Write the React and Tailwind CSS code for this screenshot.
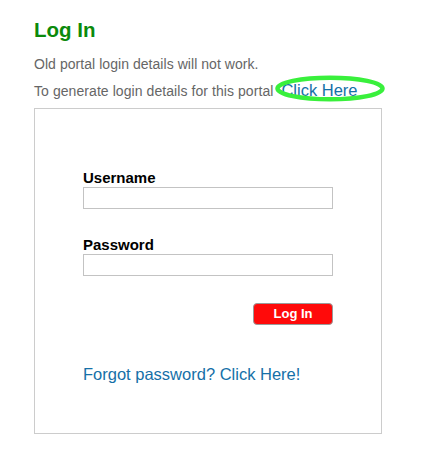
import React from "react";

const App = () => {
  return (
    <div className="min-h-[469px] bg-white pl-[34px] pt-[18px] font-['Liberation_Sans',Arial,sans-serif]">
      {/* Heading */}
      <h1 className="text-[20.5px] leading-[24px] font-bold text-[#0b8a0b]">Log In</h1>

      {/* Notice */}
      <div className="mt-[12px] text-[14px] leading-[20px] tracking-[0.05px] text-[#666666]">
        Old portal login details will not work.
      </div>
      <div className="relative mt-[6px] h-[20px] text-[14px] leading-[20px] tracking-[0.07px] text-[#666666]">
        To generate login details for this portal{" "}
        <a href="#" className="ml-[4px] text-[16.5px] leading-[20px] tracking-normal text-[#1570a8]">
          Click Here
        </a>
        <svg
          className="absolute left-[239px] top-[-5px]"
          width="114"
          height="28"
          viewBox="0 0 114 28"
          fill="none"
        >
          <ellipse cx="57" cy="13.5" rx="52.5" ry="10.8" stroke="#39f03c" strokeWidth="4.5" />
        </svg>
      </div>

      {/* Login box */}
      <div className="mt-[8px] w-[348px] h-[326px] border border-[#cccccc] pl-[48px] pt-[60px]">
        <form className="flex w-[250px] flex-col" onSubmit={(e) => e.preventDefault()}>
          <label className="text-[15px] leading-[18px] font-bold text-black">Username</label>
          <input type="text" className="h-[22px] w-[250px] border border-[#c3c3c3] bg-white outline-none" />

          <label className="mt-[27px] text-[15px] leading-[18px] font-bold text-black">Password</label>
          <input type="password" className="h-[22px] w-[250px] border border-[#c3c3c3] bg-white outline-none" />

          <div className="mt-[27px] flex justify-end">
            <button
              type="submit"
              className="h-[22px] w-[80px] rounded-[4px] border border-[#9a9a9a] bg-[#ff0a0a] text-[13px] leading-[20px] font-bold text-white"
            >
              Log In
            </button>
          </div>

          <a href="#" className="mt-[39px] block text-[16.5px] leading-[20px] text-[#1570a8] whitespace-nowrap">
            Forgot password? Click Here!
          </a>
        </form>
      </div>
    </div>
  );
};

export default App;
